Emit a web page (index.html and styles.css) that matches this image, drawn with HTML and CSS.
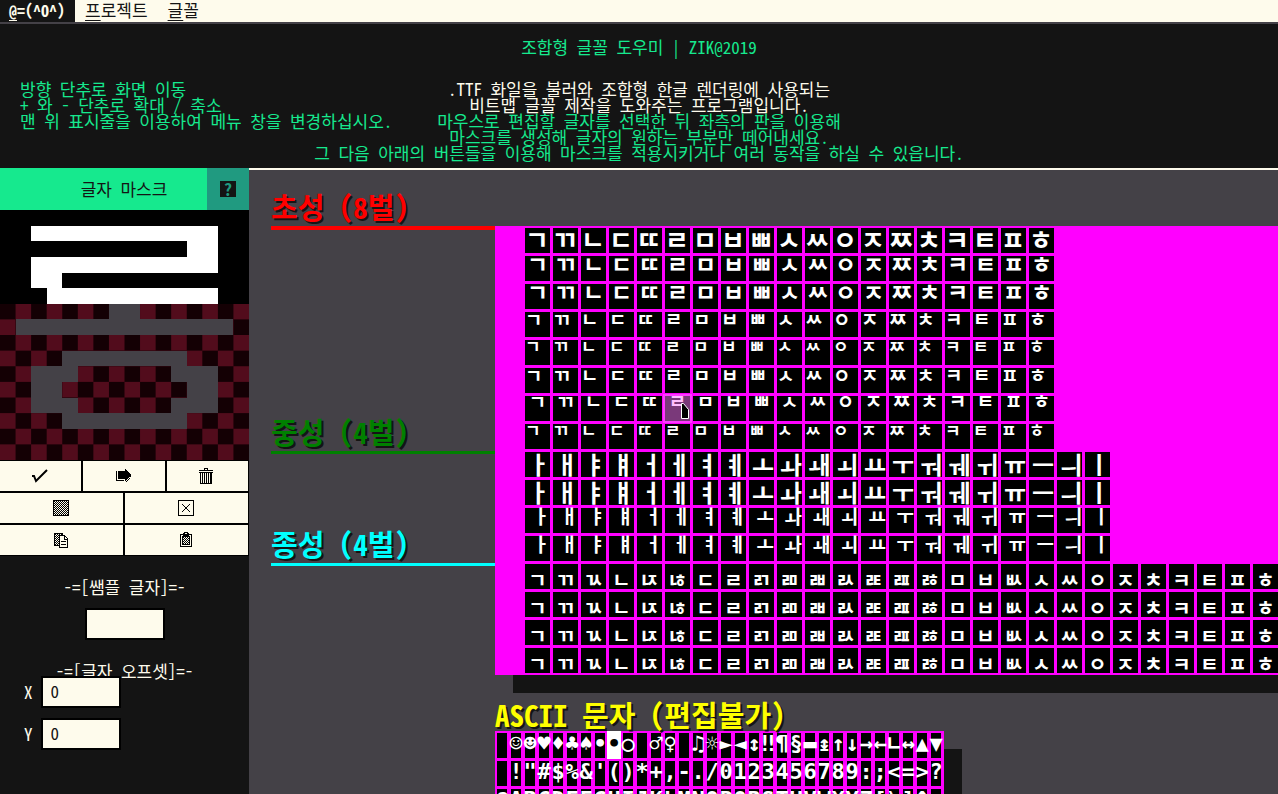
FILE: index.html
```html
<!DOCTYPE html>
<html lang="ko">
<head>
<meta charset="utf-8">
<title>조합형 글꼴 도우미</title>
<link rel="stylesheet" href="styles.css">
</head>
<body>
<nav class="menubar">
  <button class="menu-item is-active"><u>@</u>=(^O^)</button>
  <button class="menu-item"><u>프</u>로젝트</button>
  <button class="menu-item"><u>글</u>꼴</button>
</nav>

<header class="intro">
  <h1 class="intro-title">조합형 글꼴 도우미 | ZIK@2019</h1>
  <div class="intro-body">
    <p class="intro-keys">방향 단추로 화면 이동<br>+ 와 - 단추로 확대 / 축소<br>맨 위 표시줄을 이용하여 메뉴 창을 변경하십시오.</p>
    <p class="intro-about"><span class="intro-lead">.TTF 화일을 불러와 조합형 한글 렌더링에 사용되는<br>비트맵 글꼴 제작을 도와주는 프로그램입니다.</span><br>마우스로 편집할 글자를 선택한 뒤 좌측의 판을 이용해<br>마스크를 생성해 글자의 원하는 부분만 떼어내세요.<br>그 다음 아래의 버튼들을 이용해 마스크를 적용시키거나 여러 동작을 하실 수 있읍니다.</p>
  </div>
</header>

<div class="workspace">
  <aside class="panel">
    <div class="panel-head">
      <h2 class="panel-title">글자 마스크</h2>
      <button class="help" aria-label="도움말"><span class="help-mark">?</span></button>
    </div>
    <svg class="mask" viewBox="0 0 16 16" preserveAspectRatio="none" shape-rendering="crispEdges" aria-label="글자 마스크">
      <defs>
        <pattern id="checker" width="2" height="2" patternUnits="userSpaceOnUse">
          <path fill="#140004" d="M0 0h2v2h-2z"/>
          <path fill="#520c1c" d="M1 0h1v1h-1zM0 1h1v1h-1z"/>
        </pattern>
      </defs>
      <path fill="#000" d="M0 0h16v6h-16z"/>
      <path fill="#fff" d="M2 1h12v3h-10v1h10v1h-11v-1h-1v-2h10v-1h-10z"/>
      <path fill="url(#checker)" d="M0 6h16v10h-16z"/>
      <path fill="#444147" d="M7 6h2v1h6v1h-14v-1h6z"/>
      <path fill="#444147" fill-rule="evenodd" d="M4 9h8v1h2v3h-2v1h-8v-1h-2v-3h2zM5 10v1h-1v1h1v1h6v-1h1v-1h-1v-1z"/>
    </svg>
    <div class="tools tools-three">
      <button class="tool" aria-label="적용"><svg viewBox="0 0 16 16" width="16" height="16"><path fill="none" stroke="#000" stroke-width="2" d="M0 8h2l2 5L15 2"/></svg></button>
      <button class="tool" aria-label="이동"><svg viewBox="0 0 16 16" width="16" height="16" shape-rendering="crispEdges"><path d="M3 3h7V1h1v1h1v1h1v1h1v1h1v1h1v2h-1v1h-1v1h-1v1h-1v1h-1v1h-1v-2H3zM1 3h1v9h7v1H1zM15 8h1v1h-1zM14 10h1v1h-1zM13 11h1v1h-1zM12 12h1v1h-1zM11 13h1v1h-1z"/></svg></button>
      <button class="tool" aria-label="삭제"><svg viewBox="0 0 16 16" width="16" height="16" shape-rendering="crispEdges"><path d="M6 0h4v2h5v1H1V2h5zM7 1v1h2V1zM1 4h14v1h-1v11H2V5H1zM3 5v10h1V5zM5 5v10h1V5zM7 5v10h1V5zM9 5v10h1V5zM11 5v10h1V5z" fill-rule="evenodd"/></svg></button>
    </div>
    <div class="tools tools-two">
      <button class="tool" aria-label="채우기"><svg viewBox="0 0 16 16" width="16" height="16" shape-rendering="crispEdges"><defs><pattern id="dots" width="2" height="2" patternUnits="userSpaceOnUse"><path d="M0 0h1v1H0zM1 1h1v1H1z"/></pattern></defs><path fill="url(#dots)" d="M0 0h16v16H0z"/><path fill="none" stroke="#000" d="M.5.5h15v15H.5z"/></svg></button>
      <button class="tool" aria-label="비우기"><svg viewBox="0 0 16 16" width="16" height="16"><path fill="none" stroke="#000" shape-rendering="crispEdges" d="M.5.5h15v15H.5z"/><path fill="none" stroke="#000" d="M4 4l8 8M12 4l-8 8"/></svg></button>
      <button class="tool" aria-label="복사"><svg viewBox="0 0 16 16" width="16" height="16" shape-rendering="crispEdges"><path fill="url(#dots)" d="M1 1h9v12H1z"/><path fill="none" stroke="#000" d="M1.500 1.500h8v12h-8z"/><path fill="#fefbec" stroke="#000" d="M6.500 3.500h5l3 3v9h-8z"/><path fill="none" stroke="#000" d="M11.500 3v4h3M8 9.500h5M8 12.500h5"/></svg></button>
      <button class="tool" aria-label="붙여넣기"><svg viewBox="0 0 16 16" width="16" height="16" shape-rendering="crispEdges"><path fill="none" stroke="#000" d="M2.500 2.500h11v12h-11z"/><path fill-rule="evenodd" d="M5 1h1V0h4v1h1v3H5zM7 1v1h2V1z"/><path fill="url(#dots)" d="M4 4h8v9H4z"/><path fill="none" stroke="#000" d="M4.500 4.500h7v8h-7z"/></svg></button>
    </div>
    <form class="fields">
      <label class="field-title" for="sample">-=[쌤플 글자]=-</label>
      <input class="box sample" id="sample" type="text">
      <h3 class="field-title offset-title">-=[글자 오프셋]=-</h3>
      <div class="offset-row first"><label for="off-x">X</label><input class="box" id="off-x" type="text" value="0"></div>
      <div class="offset-row"><label for="off-y">Y</label><input class="box" id="off-y" type="text" value="0"></div>
    </form>
  </aside>

  <main class="stage">
    <div class="johab">
      <div class="legend">
        <h2 class="legend-item initial">초성 (8벌)</h2>
        <h2 class="legend-item medial">중성 (4벌)</h2>
        <h2 class="legend-item final">종성 (4벌)</h2>
      </div>
      <div class="sheet" id="sheet"></div>
    </div>
    <section class="ascii">
      <h2 class="ascii-title">ASCII 문자 (편집불가)</h2>
      <div class="ascii-sheet" id="ascii"></div>
    </section>
  </main>
</div>
<script src="sheet.js"></script>
</body>
</html>
```
FILE: styles.css
```css
* { box-sizing: border-box; }
body {
  margin: 0;
  height: 100vh;
  overflow: hidden;
  display: flex;
  flex-direction: column;
  background: #141414;
  color: #fefbec;
  font: 17px/16px "Noto Sans Mono CJK KR", "Noto Sans CJK KR", monospace;
}
h1, h2, h3, p { margin: 0; font-weight: 400; font-size: 17px; }
button, input { font: inherit; color: #141414; border: 0; border-radius: 0; padding: 0; background: #fefbec; }

.menubar { display: flex; flex: none; height: 24px; background: #fefbec; border-bottom: 2px solid #444147; }
.menu-item { padding: 0 10px 2px; }
.menu-item u { text-underline-offset: 3px; text-decoration-thickness: 1px; }
.menu-item.is-active { padding: 0 10px 3px 9px; background: #141414; color: #fefbec; font-size: 16px; font-weight: 700; }

.intro { flex: none; padding: 15px 20px 7px; color: #16e98e; border-bottom: 2px solid #fefbec; }
.intro-title { text-align: center; margin-bottom: 26px; }
.intro-body { display: grid; white-space: nowrap; }
.intro-keys, .intro-about { grid-area: 1 / 1; }
.intro-keys { justify-self: start; }
.intro-about { justify-self: center; text-align: center; }
.intro-lead { color: #fefbec; }

.workspace { flex: 1; min-height: 0; display: flex; }
.panel { flex: none; width: 249px; margin-top: -2px; background: #141414; }
.panel-head { display: flex; height: 42px; }
.panel-title { flex: 1; padding-left: 41px; line-height: 42px; text-align: center; background: #16e98e; color: #141414; }
.help { width: 42px; background: #209a80; display: flex; align-items: center; justify-content: center; }
.help-mark { width: 16px; background: #141414; color: #209a80; font-weight: 700; }
.mask { display: block; width: 100%; height: 250px; }
.tools { display: grid; gap: 2px; padding: 1px 1px 1px 0; background: #000; }
.tools-three { grid-template-columns: repeat(3, 1fr); }
.tools-two { grid-template-columns: repeat(2, 1fr); }
.tool { height: 30px; padding-right: 2px; display: flex; align-items: center; justify-content: center; }

.fields { padding-top: 23px; display: flex; flex-direction: column; }
.field-title { text-align: center; }
.box { width: 80px; height: 32px; padding: 0 8px 3px; border: 2px solid #000; position: relative; }
.sample { align-self: center; margin-top: 13px; }
.offset-title { margin-top: 23px; }
.offset-row { display: flex; align-items: center; gap: 8px; padding-left: 24px; margin-bottom: 10px; }
.offset-row.first { margin-top: -3px; }

.stage { flex: 1; min-width: 0; overflow: hidden; padding-left: 22px; background: #444147; }
.johab { display: flex; align-items: flex-start; }
.legend { flex: none; width: 224px; }
.legend-item { display: flex; align-items: flex-end; padding-bottom: 4px; font-size: 29px; line-height: 32px; font-weight: 700; text-shadow: 2px 2px #141414; border-bottom: 3px solid; }
.initial { height: 60px; border-bottom-width: 4px; color: #f00; }
.medial { height: 224px; color: #008000; }
.final { height: 112px; color: #0ff; }
.sheet { flex: none; margin-top: 56px; padding: 1px 2px 0 29px; background: #f0f; box-shadow: 18px 18px #141414; }
.sheet-row { display: flex; height: 28px; padding: 1px 1px 2px; gap: 3px; }
.glyph { flex: none; position: relative; display: flex; width: 25px; height: 25px; background: #000; color: #fff; font-family: "Noto Sans CJK KR", sans-serif; font-weight: 700; white-space: nowrap; }
.set-tall { font-size: 26px; line-height: 22px; }
.set-wide { font-size: 23px; line-height: 14px; justify-content: center; }
.set-mid { font-size: 19px; line-height: 14px; }
.set-low { font-size: 17px; line-height: 12px; }
.set-lowwide { font-size: 19px; line-height: 10px; justify-content: center; }
.set-vowel { font-size: 24px; line-height: 23px; justify-content: flex-end; }
.set-vowel-short { font-size: 19px; line-height: 16px; justify-content: flex-end; }
.set-final { font-size: 20px; line-height: 31px; justify-content: center; }
.hover-mark { position: absolute; inset: -2px; background: #ff78ff; opacity: 0.48; }
.pointer { position: absolute; left: 16px; top: 7px; width: 8px; height: 16px; }

.ascii { padding-left: 224px; margin-top: 24px; }
.ascii-title { padding-bottom: 2px; font-size: 29px; line-height: 30px; font-weight: 700; color: #ff0; text-shadow: 2px 2px #141414; }
.ascii-sheet { width: 449px; padding-left: 2px; background: #f0f; box-shadow: 18px 18px #141414; }
.ascii-row { display: flex; height: 28px; padding: 2px 0 1px; gap: 4px; }
.char { flex: none; width: 10px; background: #000; color: #fff; display: flex; justify-content: center; font: 700 22px/22px "DejaVu Sans Mono", monospace; }
.char.is-inverse { width: 14px; margin: -2px -2px -1px; padding-top: 2px; background: #fff; color: #000; }
```
FILE: sheet.js
```js
const initials = 'ㄱㄲㄴㄷㄸㄹㅁㅂㅃㅅㅆㅇㅈㅉㅊㅋㅌㅍㅎ';
const medials = 'ㅏㅐㅑㅒㅓㅔㅕㅖㅗㅘㅙㅚㅛㅜㅝㅞㅟㅠㅡㅢㅣ';
const finals = 'ㄱㄲㄳㄴㄵㄶㄷㄹㄺㄻㄼㄽㄾㄿㅀㅁㅂㅄㅅㅆㅇㅈㅊㅋㅌㅍㅎ';

const sets = [
  [initials, 'tall'], [initials, 'wide'], [initials, 'wide'], [initials, 'mid'],
  [initials, 'low'], [initials, 'mid'], [initials, 'lowwide'], [initials, 'low'],
  [medials, 'vowel'], [medials, 'vowel'], [medials, 'vowel-short'], [medials, 'vowel-short'],
  [finals, 'final'], [finals, 'final'], [finals, 'final'], [finals, 'final'],
];

const add = (parent, className, text = '') => {
  const node = document.createElement('div');
  node.className = className;
  node.textContent = text;
  parent.append(node);
  return node;
};

const sheet = document.getElementById('sheet');
sets.forEach(([letters, kind], rowIndex) => {
  const row = add(sheet, 'sheet-row');
  [...letters].forEach((letter, column) => {
    const cell = add(row, 'glyph set-' + kind, letter);
    if (rowIndex === 6 && column === 5) {
      add(cell, 'hover-mark');
      cell.insertAdjacentHTML('beforeend',
        '<svg class="pointer" viewBox="0 0 8 16"><path fill="#000" stroke="#fff" d="M.5 .5h2l5 6v9h-7z"/></svg>');
    }
  });
});

const rows = [
  ' ☺☻♥♦♣♠•◘○ ♂♀ ♫☼►◄↕‼¶§▬↨↑↓→←∟↔▲▼',
  ' !"#$%&\'()*+,-./0123456789:;<=>?',
  '@ABCDEFGHIJKLMNOPQRSTUVWXYZ[\\]^_',
];
const ascii = document.getElementById('ascii');
rows.forEach((text) => {
  const row = add(ascii, 'ascii-row');
  [...text].forEach((char) => {
    const inverse = char === '◘';
    add(row, inverse ? 'char is-inverse' : 'char', inverse ? '•' : char);
  });
});
```
